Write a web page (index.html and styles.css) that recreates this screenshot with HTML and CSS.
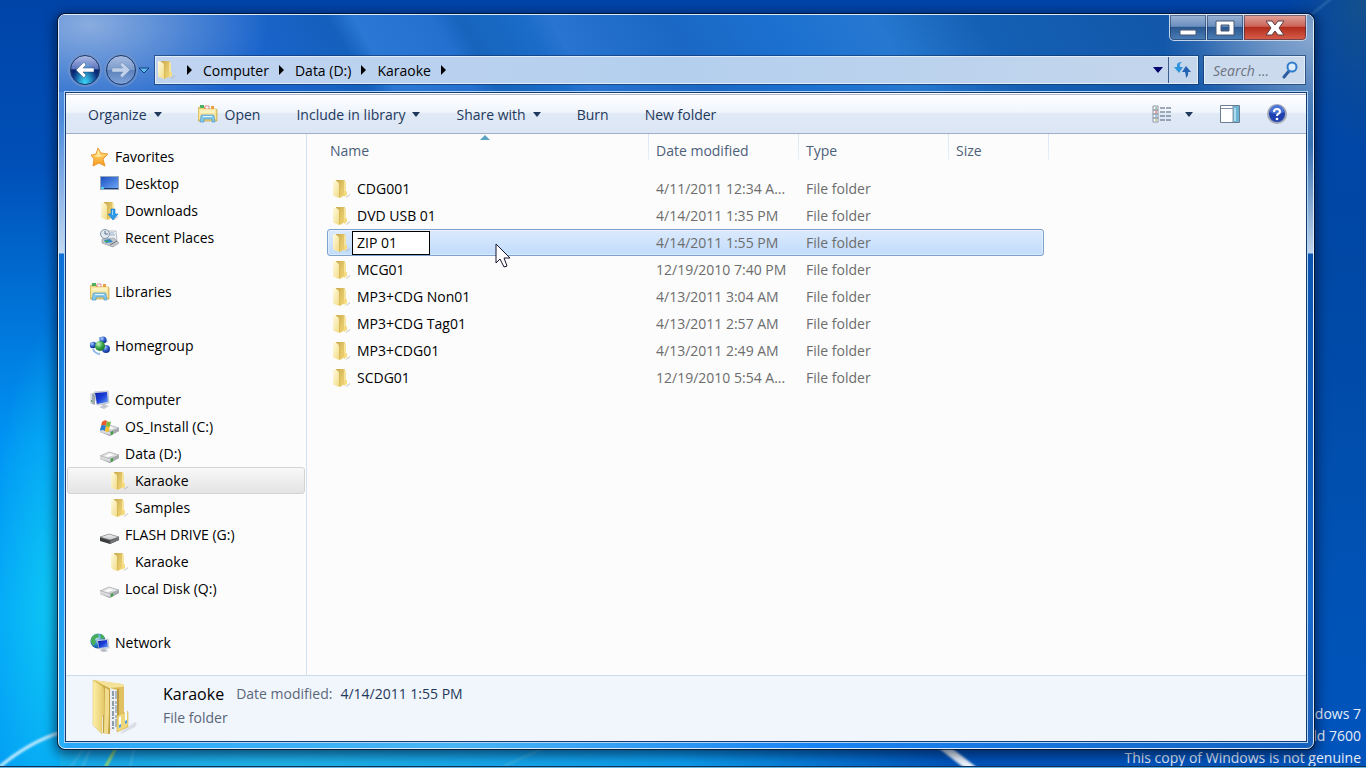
FILE: index.html
```
<!DOCTYPE html>
<html lang="en">

<head>
<meta charset="UTF-8">
<meta name="viewport" content="width=device-width, initial-scale=1.0">
<title>Karaoke</title>
<link rel="stylesheet" href="styles.css">
</head>

<body>

<!-- shared icons -->
<svg class="defs" width="0" height="0" aria-hidden="true">
    <defs>
        <linearGradient id="gFolder" x1="0" x2="1" y1="0" y2="1">
            <stop offset="0" stop-color="#fffbe0"/><stop offset="1" stop-color="#f2dc8a"/>
        </linearGradient>
        <linearGradient id="gFolderBack" x1="0" x2="1" y1="0" y2="1">
            <stop offset="0" stop-color="#c8a848"/><stop offset=".5" stop-color="#e0c468"/><stop offset="1" stop-color="#f2d470"/>
        </linearGradient>
        <linearGradient id="gScreen" x1="0" x2="1" y1="0" y2="1">
            <stop offset="0" stop-color="#0a1fa8"/><stop offset=".5" stop-color="#1c3fd8"/><stop offset="1" stop-color="#6fa8f8"/>
        </linearGradient>
        <linearGradient id="gDesk" x1="0" x2="1" y1="0" y2="1">
            <stop offset="0" stop-color="#1c4fc4"/><stop offset="1" stop-color="#6ba4f2"/>
        </linearGradient>
        <linearGradient id="gStar" x1="0" x2="0" y1="0" y2="1">
            <stop offset="0" stop-color="#ffe98a"/><stop offset="1" stop-color="#f79a1c"/>
        </linearGradient>
        <linearGradient id="gDrive" x1="0" x2="0" y1="0" y2="1">
            <stop offset="0" stop-color="#f4f4f4"/><stop offset="1" stop-color="#c2c4c6"/>
        </linearGradient>
        <radialGradient id="gBlueBall" cx=".35" cy=".3" r=".8">
            <stop offset="0" stop-color="#b8d4ff"/><stop offset=".5" stop-color="#2c5cc8"/><stop offset="1" stop-color="#0c2478"/>
        </radialGradient>
        <radialGradient id="gGreenBall" cx=".35" cy=".3" r=".8">
            <stop offset="0" stop-color="#c8f4c0"/><stop offset=".5" stop-color="#3ca848"/><stop offset="1" stop-color="#126828"/>
        </radialGradient>
        <radialGradient id="gGlobe" cx=".4" cy=".3" r=".8">
            <stop offset="0" stop-color="#c8ecff"/><stop offset=".5" stop-color="#2c8cd0"/><stop offset="1" stop-color="#0c3c88"/>
        </radialGradient>
        <linearGradient id="gBigFolder" x1="0" x2="1">
            <stop offset="0" stop-color="#fdf0a8"/><stop offset="1" stop-color="#e6ca6c"/>
        </linearGradient>
    </defs>

    <symbol id="folder" viewBox="0 0 20 20">
        <path d="M14 18l4-3q1 1-1 2l-3 2z" fill="#a8a8a8" opacity=".6"/>
        <path d="M4 1h8q1 0 1 1v14l-5 3z" fill="url(#gFolderBack)"/>
        <path d="M12 2l2 1v10l-2 3z" fill="#f6e49c"/>
        <path d="M1 2q0-1 1-1l2 1q3 1 3 3v14l-5-2q-1 0-1-2z" fill="url(#gFolder)"/>
        <path d="M7 5v13l1 1V5z" fill="#d8b850"/>
        <path d="M12 12h2q1 0 1 1v3l-3 2z" fill="#f6dc80"/>
    </symbol>
    <symbol id="star" viewBox="0 0 20 20">
        <path d="M8 1l3 5 7 1-5 5 2 7-6-3-6 3 1-7-3-4 5-1z" fill="url(#gStar)" stroke="#e8861a" stroke-width=".8" stroke-linejoin="round"/>
        <path d="M8 3l2 5 4 1-6 1-4-1 3-1z" fill="#fff6b8" opacity=".7"/>
    </symbol>
    <symbol id="desktop" viewBox="0 0 20 20">
        <path d="M0 2h19v14H0z" fill="#9aa8bc"/>
        <path d="M1 3h17v11H1z" fill="url(#gDesk)"/>
        <path d="M1 14h17v1H1z" fill="#1d3c70"/>
        <path d="M1 13h3v2H1z" fill="#4fc8e8"/>
    </symbol>
    <symbol id="downloads" viewBox="0 0 20 20">
        <use href="#folder"/>
        <path d="M11 8h4v5h3l-5 6-5-6h3z" fill="#2d9be8" stroke="#1674c4" stroke-width=".6"/>
        <path d="M12 9h1v5h-1z" fill="#9ad8fa"/>
    </symbol>
    <symbol id="recent" viewBox="0 0 20 20">
        <path d="M8 3h8l1 10H7z" fill="#eef2f6" stroke="#9aa4ae" stroke-width=".7"/>
        <path d="M10 5h4M10 7h5" stroke="#7898b8" stroke-width=".8"/>
        <circle cx="5" cy="6" r="4.5" fill="#dfe8f0" stroke="#8494a4"/>
        <path d="M5 3v3h3" fill="none" stroke="#4a6078" stroke-width=".9"/>
        <path d="M2 11l12-1 5 5-6 4-11-4z" fill="#c2c6ca" stroke="#8c9298" stroke-width=".6"/>
        <path d="M4 12l6-1 3 3-7 1z" fill="#2f88cc"/>
        <path d="M4 14l3-2 2 2z" fill="#3ca85a"/>
        <path d="M10 17l7-4" stroke="#6c7278"/>
    </symbol>
    <symbol id="libraries" viewBox="0 0 20 20">
        <path d="M0 5q0-2 2-2h4l1 2h11q1 0 1 1v11H0z" fill="#ecd079" stroke="#c8a84a" stroke-width=".7"/>
        <path d="M2 1h4v3H2z" fill="#4cb060"/><path d="M7 2h4v3H7z" fill="#fff" stroke="#c84c3c" stroke-width=".6"/>
        <path d="M13 2h3v3h-3z" fill="#e8a040"/>
        <path d="M1 5h17v10H1z" fill="#f8e6a0"/>
        <path d="M2 6h15v3H2z" fill="#fcf2c0"/>
        <path d="M3 12q0-1 1-1h11q1 0 1 1l1 6h-3v-3H6v3H2z" fill="#86c8ea" stroke="#4c9cc8" stroke-width=".7"/>
        <path d="M5 12h9v1H5z" fill="#dff4ff"/>
    </symbol>
    <symbol id="homegroup" viewBox="0 0 20 20">
        <path d="M3 13a8 8 0 0 0 7 5M9 2a8 8 0 0 1 8 4" fill="none" stroke="#8fbaf0" stroke-width="2"/>
        <circle cx="13" cy="4" r="3.5" fill="url(#gBlueBall)"/>
        <circle cx="3" cy="9" r="3.3" fill="url(#gBlueBall)"/>
        <circle cx="16" cy="13" r="4" fill="url(#gBlueBall)"/>
        <circle cx="10" cy="10" r="5" fill="url(#gGreenBall)"/>
    </symbol>
    <symbol id="computer" viewBox="0 0 20 20">
        <path d="M0 4l5-1v12l-5-2z" fill="#a0a8b2"/><path d="M0 4l2-1v11l-2-1z" fill="#dce0e4"/>
        <path d="M1 10h1v2H1z" fill="#58a858"/>
        <path d="M4 2l14-1 1 12-12 2z" fill="#dfe3ea" stroke="#98a0ac" stroke-width=".5"/>
        <path d="M5 3l12-1 1 10-11 2z" fill="url(#gScreen)"/>
        <path d="M11 14l4-1 1 2 3 1-5 3-5-2 3-1z" fill="#c4c8d0"/>
    </symbol>
    <symbol id="drive" viewBox="0 0 20 20">
        <path d="M0 12l9-4 10 3v3l-9 5-10-4z" fill="#909497"/>
        <path d="M0 12l9-4 10 3-9 4z" fill="url(#gDrive)" stroke="#a4a8ac" stroke-width=".6"/>
        <path d="M0 12l10 3v3L0 15z" fill="#d8dadc"/>
        <path d="M4 12l6-2 4 1-6 2z" fill="#fff"/>
        <path d="M10 15l9-4v3l-9 4z" fill="#a6aaad"/>
        <path d="M11 15l2-1v3l-2 1z" fill="#3ca83c"/>
    </symbol>
    <symbol id="osdrive" viewBox="0 0 20 20">
        <use href="#drive"/>
        <path d="M2 5q3-3 5-1L6 9Q4 7 1 9z" fill="#ea5a2c"/>
        <path d="M7 4q2 2 4 0l-1 5q-2 2-4 0z" fill="#7cb83c"/>
        <path d="M1 9q2-2 5 0l-1 5q-2-2-5 0z" fill="#2c7cd0"/>
        <path d="M6 9q2 2 4 0l-1 5q-2 2-4 0z" fill="#f6c22c"/>
    </symbol>
    <symbol id="flash" viewBox="0 0 20 20">
        <path d="M0 12l9-3 10 3v3l-9 4-10-3z" fill="#3c3e40"/>
        <path d="M0 12l9-3 10 3-9 3z" fill="url(#gDrive)" stroke="#85888a" stroke-width=".6"/>
        <path d="M10 16l9-4v3l-9 4z" fill="#707376"/>
    </symbol>
    <symbol id="network" viewBox="0 0 20 20">
        <circle cx="8" cy="8" r="7.6" fill="url(#gGlobe)"/>
        <path d="M1 6q2-5 7-5l1 3-4 2 1 3-2 4q-4-3-3-7zM10 1q3 0 5 4l-4 1z" fill="#48ac58"/>
        <path d="M7 7l11-1 1 9-10 1z" fill="#dfe3ea" stroke="#98a0ac" stroke-width=".5"/>
        <path d="M8 8l9-1 1 7-9 1z" fill="url(#gScreen)"/>
        <path d="M12 16h3l3 2-4 1-4-1z" fill="#b8bcc4"/>
    </symbol>
    <symbol id="bigfolder" viewBox="0 0 48 60">
        <path d="M30 54l14-10q3 1 0 5L30 56z" fill="#b8bcc4" opacity=".4"/>
        <path d="M2 2l28 4q3 0 3 3v38l-15 5z" fill="#d8b850"/>
        <path d="M3 2l29 4 1 3-15 1z" fill="#f4e298"/>
        <path d="M19 10l7 2v38l-5 4-3-6z" fill="#eceef2"/>
        <path d="M22 13v38" stroke="#8c9ca8" stroke-width="2" stroke-dasharray="5 1 2 2"/>
        <path d="M25 13v37" stroke="#70889c" stroke-dasharray="8 2 3 1"/>
        <path d="M26 12l7-3v41l-7 2z" fill="#e0c060"/>
        <path d="M26 12l2-1v40l-2 1z" fill="#b89840"/>
        <path d="M26 38l3-2 4-1q1-1 2 1v-2q2-2 2 1v14l-11 5z" fill="#efd678" stroke="#c8a63e" stroke-width=".5"/>
        <path d="M28 39l2-1v11l-2 1zM34 34l2-1v12l-2 1z" fill="#f4fafe"/>
        <path d="M28 47l2-1v3l-2 1zM34 43l2-1v3l-2 1z" fill="#4ca0dc"/>
        <path d="M2 2l10 6q7 1 7 5v43l-7-1V9z" fill="#c0a040"/>
        <path d="M14 9l4 3v23l-1 21-4-1z" fill="#f0dc8c"/>
        <path d="M2 2l9 6q2 1 2 4v24l-2 3v17L4 49q-2-1-2-3z" fill="url(#gBigFolder)" stroke="#dcc066" stroke-width=".5"/>
    </symbol>
</svg>

<div class="desktop">
    <svg class="wallpaper" viewBox="0 0 1366 768" preserveAspectRatio="none" aria-hidden="true">
        <defs>
            <filter id="soft"><feGaussianBlur stdDeviation="1"/></filter>
        </defs>
        <g fill="none" filter="url(#soft)">
            <path d="M-4 770Q28 742 62 732" stroke="#c4ecff" stroke-width="3"/>
            <path d="M70 768l14-20M82 768l8-18" stroke="#6cc8f0"/>
            <path d="M105 768l12-22" stroke="#c8e83c" stroke-width="2"/>
            <path d="M130 768l4-20" stroke="#5cc8e8"/>
            <path d="M504 766l40-18" stroke="#5cc0e0"/>
            <path d="M940 744l36 28" stroke="#eef6ff" stroke-width="8"/>
            <path d="M1312 14l20-16" stroke="#5c98c8"/>
        </g>
    </svg>

    <p class="watermark">Windows 7<br>Build 7600<br>This copy of Windows is not genuine</p>
    <div class="taskbar"></div>

    <main class="window">
        <header class="titlebar">
            <div class="caption">
                <button class="cap" aria-label="Minimize"><svg width="18" height="8"><rect x="1" y="2" width="16" height="5" rx="1" fill="#fff" stroke="#4a5670"/></svg></button>
                <button class="cap" aria-label="Maximize"><svg width="20" height="16"><path d="M1 1h18v14H1zM6 5v6h8V5z" fill="#fff" fill-rule="evenodd" stroke="#4a5670"/></svg></button>
                <button class="cap cap-close" aria-label="Close"><svg width="20" height="16"><path d="M1 1h6l3 4 3-4h6l-5 7 5 7h-6l-3-4-3 4H1l5-7z" fill="#fff" stroke="#5a3c44" stroke-linejoin="round"/></svg></button>
            </div>

            <div class="navbar">
                <div class="history">
                    <button class="round back" aria-label="Back"><svg width="20" height="18"><path d="M9 1L1 9l8 8 2-3-3-3h11V7H8l3-3z" fill="#fff" stroke="#274a80" stroke-width=".5"/></svg></button>
                    <button class="round forward" aria-label="Forward"><svg width="20" height="18"><path d="M11 1l8 8-8 8-2-3 3-3H1V7h11L9 4z" fill="#c0d0e8" stroke="#6c88b4" stroke-width=".5"/></svg></button>
                    <button class="recentpages" aria-label="Recent pages"><svg width="10" height="6"><path d="M0 1h10L5 6z" fill="#5cbcf0" stroke="#123c78"/></svg></button>
                </div>
                <div class="address">
                    <svg class="icon" width="20" height="20"><use href="#folder"/></svg>
                    <svg class="crumb-arrow" width="6" height="10"><path d="M0 0l5 5-5 5z"/></svg>
                    <button class="crumb">Computer</button>
                    <svg class="crumb-arrow" width="6" height="10"><path d="M0 0l5 5-5 5z"/></svg>
                    <button class="crumb">Data (D:)</button>
                    <svg class="crumb-arrow" width="6" height="10"><path d="M0 0l5 5-5 5z"/></svg>
                    <button class="crumb">Karaoke</button>
                    <svg class="crumb-arrow" width="6" height="10"><path d="M0 0l5 5-5 5z"/></svg>
                    <button class="previous" aria-label="Previous locations"><svg width="10" height="6"><path d="M0 0h10L5 6z" fill="#04046c"/></svg></button>
                    <button class="refresh" aria-label="Refresh"><svg width="18" height="18"><path d="M8 1Q2 1 3 6H0l5 6 4-6H6Q5 3 8 1z" fill="#2c94dc"/><path d="M12 17q3-3 2-6h3l-5-6-4 6h3q1 3 1 6z" fill="#2460b4"/></svg></button>
                </div>
                <div class="search">
                    <input type="text" aria-label="Search Karaoke" placeholder="Search ...">
                    <svg width="18" height="18"><path d="M8 10l-5 6" stroke="#2c5ca0" stroke-width="3" stroke-linecap="round"/><circle cx="11" cy="6" r="4.5" fill="#dcecfa" stroke="#2f7cc8" stroke-width="2"/></svg>
                </div>
            </div>
        </header>

        <div class="client">
            <div class="toolbar">
                <button class="tool">Organize <svg width="8" height="5"><path d="M0 0h8L4 5z"/></svg></button>
                <button class="tool"><svg class="icon" width="20" height="20"><use href="#libraries"/></svg> Open</button>
                <button class="tool">Include in library <svg width="8" height="5"><path d="M0 0h8L4 5z"/></svg></button>
                <button class="tool">Share with <svg width="8" height="5"><path d="M0 0h8L4 5z"/></svg></button>
                <button class="tool">Burn</button>
                <button class="tool">New folder</button>
                <div class="tool-right">
                    <button class="tool view" aria-label="Change your view">
                        <svg width="20" height="18">
                            <path d="M1 1h5v4H1zM1 5h5v4H1zM1 9h5v4H1zM1 13h5v4H1z" fill="#fff" stroke="#8a94a4"/>
                            <path d="M8 3h11M8 7h11M8 11h11M8 15h11" stroke="#4c5c74" stroke-dasharray="5 1"/>
                            <path d="M3 3h2" stroke="#4c9c6c"/><path d="M3 7h2" stroke="#e03c2c"/><path d="M3 11h2" stroke="#3c8cc8"/><path d="M3 15h2" stroke="#9cb83c"/>
                        </svg>
                        <svg width="8" height="5"><path d="M0 0h8L4 5z"/></svg>
                    </button>
                    <button class="tool" aria-label="Show the preview pane"><svg width="20" height="18"><path d="M.5.5h19v17H.5z" fill="#fff" stroke="#6c7c90"/><path d="M13 1h6v16h-6z" fill="#6cb4d4"/><path d="M14 3h2v13h-2z" fill="#a8dcee"/><path d="M1 3.500h12M13 1v16" stroke="#8494a8"/></svg></button>
                    <button class="tool" aria-label="Get help"><svg width="20" height="20"><circle cx="10" cy="10" r="9" fill="#2040b0" stroke="#a0a8b8" stroke-width="2"/><path d="M3 8a7 7 0 0 1 14 0q-7 4-14 0z" fill="#4c74d8"/><path d="M7 8q0-3 3-3t3 3q0 1-2 2-1 1-1 2" fill="none" stroke="#fff" stroke-width="2"/><circle cx="10" cy="15" r="1.300" fill="#fff"/></svg></button>
                </div>
            </div>

            <div class="panes">
                <nav class="sidebar">
                    <ul>
                        <li><a href="#"><svg class="icon" width="20" height="20"><use href="#star"/></svg>Favorites</a></li>
                        <li class="level2"><a href="#"><svg class="icon" width="20" height="20"><use href="#desktop"/></svg>Desktop</a></li>
                        <li class="level2"><a href="#"><svg class="icon" width="20" height="20"><use href="#downloads"/></svg>Downloads</a></li>
                        <li class="level2"><a href="#"><svg class="icon" width="20" height="20"><use href="#recent"/></svg>Recent Places</a></li>
                    </ul>
                    <ul>
                        <li><a href="#"><svg class="icon" width="20" height="20"><use href="#libraries"/></svg>Libraries</a></li>
                    </ul>
                    <ul>
                        <li><a href="#"><svg class="icon" width="20" height="20"><use href="#homegroup"/></svg>Homegroup</a></li>
                    </ul>
                    <ul>
                        <li><a href="#"><svg class="icon" width="20" height="20"><use href="#computer"/></svg>Computer</a></li>
                        <li class="level2"><a href="#"><svg class="icon" width="20" height="20"><use href="#osdrive"/></svg>OS_Install (C:)</a></li>
                        <li class="level2"><a href="#"><svg class="icon" width="20" height="20"><use href="#drive"/></svg>Data (D:)</a></li>
                        <li class="level3 current"><a href="#"><svg class="icon" width="20" height="20"><use href="#folder"/></svg>Karaoke</a></li>
                        <li class="level3"><a href="#"><svg class="icon" width="20" height="20"><use href="#folder"/></svg>Samples</a></li>
                        <li class="level2"><a href="#"><svg class="icon" width="20" height="20"><use href="#flash"/></svg>FLASH DRIVE (G:)</a></li>
                        <li class="level3"><a href="#"><svg class="icon" width="20" height="20"><use href="#folder"/></svg>Karaoke</a></li>
                        <li class="level2"><a href="#"><svg class="icon" width="20" height="20"><use href="#drive"/></svg>Local Disk (Q:)</a></li>
                    </ul>
                    <ul>
                        <li><a href="#"><svg class="icon" width="20" height="20"><use href="#network"/></svg>Network</a></li>
                    </ul>
                </nav>

                <section class="files">
                    <table>
                        <colgroup><col class="col-name"><col class="col-date"><col class="col-type"><col class="col-size"></colgroup>
                        <thead>
                            <tr>
                                <th>Name<svg class="sort" width="10" height="5"><path d="M0 5l5-5 5 5z" fill="#5ca4c4"/></svg></th>
                                <th>Date modified</th>
                                <th>Type</th>
                                <th>Size</th>
                            </tr>
                        </thead>
                        <tbody>
                            <tr>
                                <td><svg class="icon" width="20" height="20"><use href="#folder"/></svg>CDG001</td>
                                <td>4/11/2011 12:34 A...</td>
                                <td>File folder</td>
                                <td></td>
                            </tr>
                            <tr>
                                <td><svg class="icon" width="20" height="20"><use href="#folder"/></svg>DVD USB 01</td>
                                <td>4/14/2011 1:35 PM</td>
                                <td>File folder</td>
                                <td></td>
                            </tr>
                            <tr class="selected">
                                <td><svg class="icon" width="20" height="20"><use href="#folder"/></svg><input class="rename" type="text" aria-label="Folder name" value="ZIP 01"></td>
                                <td>4/14/2011 1:55 PM</td>
                                <td>File folder</td>
                                <td></td>
                            </tr>
                            <tr>
                                <td><svg class="icon" width="20" height="20"><use href="#folder"/></svg>MCG01</td>
                                <td>12/19/2010 7:40 PM</td>
                                <td>File folder</td>
                                <td></td>
                            </tr>
                            <tr>
                                <td><svg class="icon" width="20" height="20"><use href="#folder"/></svg>MP3+CDG Non01</td>
                                <td>4/13/2011 3:04 AM</td>
                                <td>File folder</td>
                                <td></td>
                            </tr>
                            <tr>
                                <td><svg class="icon" width="20" height="20"><use href="#folder"/></svg>MP3+CDG Tag01</td>
                                <td>4/13/2011 2:57 AM</td>
                                <td>File folder</td>
                                <td></td>
                            </tr>
                            <tr>
                                <td><svg class="icon" width="20" height="20"><use href="#folder"/></svg>MP3+CDG01</td>
                                <td>4/13/2011 2:49 AM</td>
                                <td>File folder</td>
                                <td></td>
                            </tr>
                            <tr>
                                <td><svg class="icon" width="20" height="20"><use href="#folder"/></svg>SCDG01</td>
                                <td>12/19/2010 5:54 A...</td>
                                <td>File folder</td>
                                <td></td>
                            </tr>
                        </tbody>
                    </table>
                </section>
            </div>

            <footer class="details">
                <svg width="48" height="60"><use href="#bigfolder"/></svg>
                <div>
                    <p><span class="name">Karaoke</span><span class="key">Date modified:</span><span class="value">4/14/2011 1:55 PM</span></p>
                    <p class="key">File folder</p>
                </div>
            </footer>
        </div>
    </main>

    <svg class="cursor" width="16" height="25" aria-hidden="true"><path d="M1 1v19l4-4 4 8 3-1-3-8h6z" fill="#fff" stroke="#14142c"/></svg>
</div>

</body>
</html>
```
FILE: styles.css
```
* { box-sizing: border-box; }
body { margin: 0; font-family: "Open Sans", "Noto Sans", sans-serif; font-size: 14px; color: #000; }
ul, p { margin: 0; padding: 0; list-style: none; }
button { font: inherit; color: inherit; background: none; border: 0; padding: 0; }
input { font: inherit; }
svg { flex: none; }
.defs { position: absolute; }

.desktop {
    position: relative; height: 100vh; min-height: 480px; overflow: hidden;
    background:
        radial-gradient(ellipse 60px 35% at 50px 78%, rgba(16,204,244,.8), rgba(0,160,248,0)),
        linear-gradient(#0044a8, #0050b8 22%, #0078dc 43%, #0094f4 58%, #04a8f8 80%, #04a0f4) left / 60px 100% no-repeat,
        radial-gradient(ellipse 50% 14% at 20% 100%, #20b4e8, #0c9cec 60%, rgba(0,140,230,0)),
        radial-gradient(ellipse 6% 20% at 100% 0%, #14508c, rgba(10,64,130,0)),
        linear-gradient(#0044a8, #0048a4 35%, #0052b4 75%, #0054bc);
}
.wallpaper { position: absolute; inset: 0; width: 100%; height: 100%; }
.watermark { position: absolute; right: 5px; bottom: -1px; color: #e8eef8; line-height: 22px; text-align: right; }
.taskbar { position: absolute; left: 0; right: 0; bottom: 0; height: 2px; background: #6cb8e8; border-top: 1px solid #14304c; }

/* window frame */
.window {
    position: absolute; inset: 14px 52px 19px 58px; display: flex; flex-direction: column; padding: 0 6px 6px;
    border: 1px solid #dcebf8; border-radius: 7px;
    box-shadow: 0 0 0 1px rgba(4,16,40,.8), 0 3px 12px 3px rgba(0,12,36,.6);
    background:
        linear-gradient(#6c9cdc, #4a88dc 100px, #c4d8f0 238px, #0c70d8 239px, #1c98f0 70%, #28b0f8) left / 6px 100% no-repeat,
        linear-gradient(#7098c8, #3870b4 130px, #c0d4ea 238px, #0c54b0 239px, #1a6ad0 80%, #1a60b8) right / 6px 100% no-repeat,
        linear-gradient(90deg, #28a8f8, #48b4f4 32%, #1a84f4 60%, #1260c0) bottom / 100% 8px no-repeat,
        #1a66c8;
}
.titlebar {
    margin: 0 -6px; padding: 0 6px 8px; border-radius: 6px 6px 0 0;
    background:
        radial-gradient(ellipse 180px 100px at 30px 10px, rgba(150,180,225,.9), rgba(120,160,220,0)),
        radial-gradient(ellipse 150px 90px at 100% 30%, rgba(140,170,208,.9), rgba(100,140,200,0)),
        linear-gradient(60deg, #1862cc, #1a64cc 17%, #1460bc 24%, #2a78d4 26%, #2470d0 32%, #1664bc 34%, #1a6cc8 39%, #2874d0 41%, #1a68c4 50%, #1c70d0 58%, #2678d0 66%, #1460b4 74%, #1256a8 90%, #4c80bc);
}
.caption { display: flex; justify-content: flex-end; height: 41px; }
.cap {
    display: flex; align-items: center; justify-content: center; width: 37px; height: 26px;
    border: solid #c4d4e8; border-width: 0 1px 1px 0; box-shadow: inset 0 0 0 1px rgba(20,40,80,.5);
    background: linear-gradient(#9cb4d4, #6c90c0 45%, #2c5890 50%, #4c80b8);
}
.cap:first-child { width: 38px; border-left-width: 1px; border-radius: 0 0 0 5px; }
.cap:first-child svg { margin-top: 8px; }
.cap-close { width: 63px; border-radius: 0 0 5px 0; background: linear-gradient(#e0a49c, #cc6458 45%, #b42c1c 50%, #d8604c); }

.navbar { display: flex; align-items: center; height: 28px; gap: 6px; padding: 0 2px 0 5px; }
.history { display: flex; align-items: center; gap: 6px; width: 79px; }
.round {
    display: flex; align-items: center; justify-content: center; width: 30px; height: 30px; flex: none;
    border: 1px solid #1c3868; border-radius: 50%; box-shadow: 0 0 0 2px rgba(120,150,200,.6);
}
.back { background: radial-gradient(ellipse at 50% 100%, #3cdcf8, rgba(40,150,230,0) 60%), linear-gradient(#b0bce4, #5c74c0 45%, #08246c 50%, #1450a8); }
.forward { background: linear-gradient(#a8bce0, #7c9ccc 48%, #5c80bc 52%, #80a4d8); }
.recentpages { display: flex; margin-left: -3px; }

.address, .search {
    display: flex; align-items: center; height: 28px; border: 1px solid #e0ecf8;
    background: linear-gradient(90deg, #c0d4f0, #b4cfee 50%, #c4d6ec); box-shadow: 0 0 0 1px rgba(16,48,96,.6);
}
.address { flex: 1; min-width: 0; gap: 9px; padding-left: 1px; }
.crumb-arrow { margin: 0 1px; }
.previous { display: flex; margin-left: auto; margin-right: -4px; }
.refresh { display: flex; align-items: center; justify-content: center; width: 29px; height: 26px; border-left: 1px solid #3c5c8c; }
.search { width: 101px; padding: 0 5px 0 8px; background: #ccdaee; }
.search input { flex: 1; min-width: 0; padding: 0; border: 0; outline: 0; background: none; font-style: italic; }
.search input::placeholder { color: #6c7480; }

/* toolbar */
.client { flex: 1; min-height: 0; display: flex; flex-direction: column; border: 1px solid #143c70; box-shadow: 0 0 0 1px #b0d4f4; background: #fcfcfc; }
.toolbar {
    display: flex; align-items: center; gap: 36px; height: 41px; padding: 2px 19px 0 22px; color: #1e395b; flex: none;
    border-bottom: 1px solid #a0afc8; box-shadow: inset 0 1px #fff, inset 0 2px #b4b8cc;
    background: linear-gradient(#fff, #f0f5fc 48%, #e0e9f6 52%, #dce6f4);
}
.tool { display: flex; align-items: center; gap: 7px; white-space: nowrap; fill: #1e395b; }
.tool-right { display: flex; align-items: center; gap: 27px; margin-left: auto; }
.view { gap: 13px; }

/* navigation pane */
.panes { flex: 1; min-height: 0; display: flex; }
.sidebar { width: 241px; flex: none; padding: 9px 1px 0; border-right: 1px solid #d4e2f4; overflow: hidden; }
.sidebar ul { margin-bottom: 27px; }
.sidebar li { height: 27px; padding-left: 22px; border: 1px solid transparent; border-radius: 3px; }
.sidebar .level2 { padding-left: 32px; }
.sidebar .level3 { padding-left: 42px; }
.sidebar a { display: flex; align-items: center; gap: 5px; height: 25px; color: #000; text-decoration: none; white-space: nowrap; }
.sidebar .current { border-color: #d4d4d4; background: linear-gradient(#f8f8f8, #e4e4e4); }

/* file list */
.files { flex: 1; min-width: 0; padding-left: 20px; overflow: hidden; }
table { table-layout: fixed; width: 722px; border-collapse: collapse; }
.col-name { width: 322px; }
.col-date, .col-type { width: 150px; }
.col-size { width: 100px; }
th {
    position: relative; height: 41px; padding: 6px 7px 0; line-height: 22px; vertical-align: top; text-align: left;
    font-weight: normal; color: #4c607a; background: linear-gradient(#d8e8f8, #e8f0fa) right top / 1px 26px no-repeat;
}
th:first-child { padding-left: 3px; }
.sort { position: absolute; left: 50%; top: 1px; margin-left: -8px; }
td { height: 27px; padding: 0 7px; line-height: 27px; color: #6d6d6d; white-space: nowrap; }
td:first-child { display: flex; align-items: center; padding-left: 5px; color: #000; }
td .icon { margin-right: 5px; }
.selected { position: relative; z-index: 0; }
.selected::before {
    content: ""; position: absolute; z-index: -1; inset: 0 5px 0 0; border: 1px solid #7da2ce; border-radius: 3px;
    background: linear-gradient(#dceafc, #c1dcfc); box-shadow: inset 0 0 0 1px rgba(255,255,255,.4);
}
.rename { width: 78px; height: 24px; margin-left: -5px; padding: 0 4px; border: 1px solid #000; background: #fff; outline: 0; }

/* details pane */
.details { display: flex; gap: 24px; height: 66px; padding: 2px 25px; flex: none; border-top: 1px solid #c8dcea; background: #f1f5fc; }
.details p { display: flex; align-items: center; line-height: 24px; height: 24px; }
.details div { padding-top: 4px; }
.name { margin-right: 12px; font-size: 16px; }
.key { margin-right: 8px; color: #5a6779; }
.value { color: #1e395b; }

.cursor { position: absolute; left: 495px; top: 243px; }
```
